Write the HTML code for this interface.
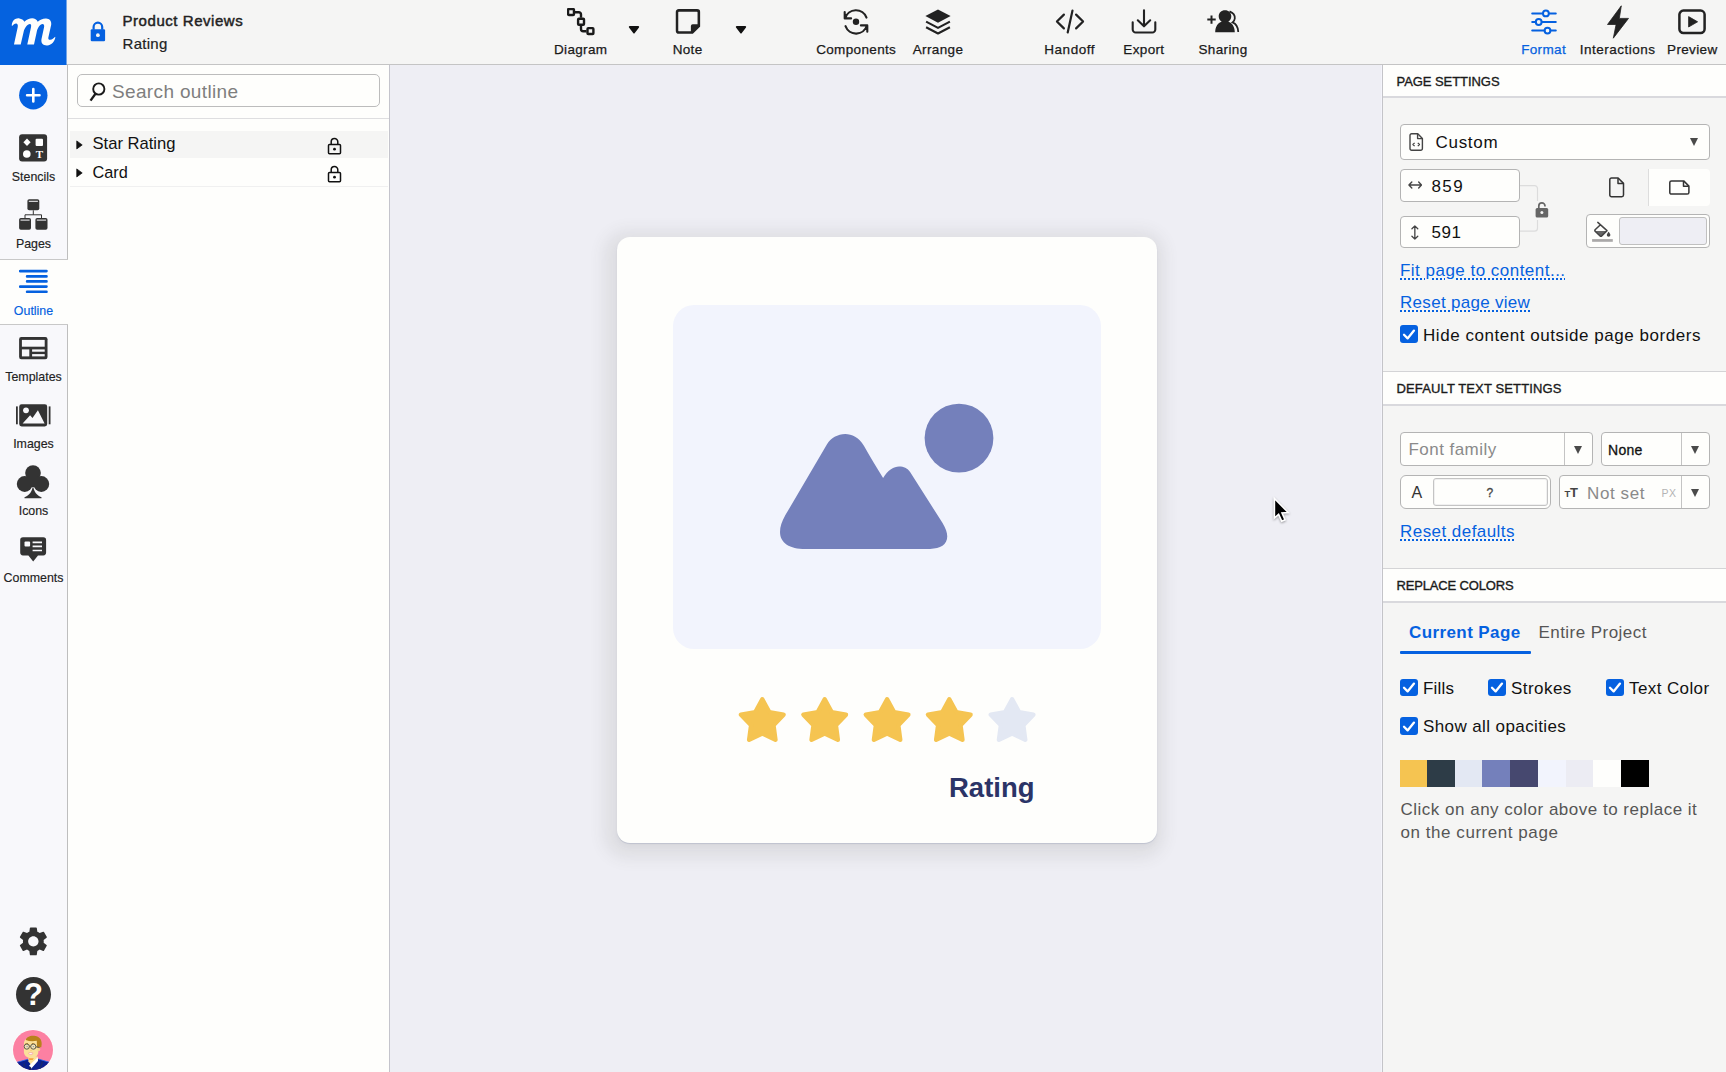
<!DOCTYPE html>
<html lang="en">
<head>
<meta charset="utf-8">
<title>Product Reviews - Rating</title>
<style>
*{box-sizing:border-box;margin:0;padding:0}
html,body{width:1726px;height:1072px;overflow:hidden;background:#eeeef4;font-family:"Liberation Sans",sans-serif;color:#111}
.abs{position:absolute}
#top{position:absolute;left:0;top:0;width:1726px;height:65px;background:#f5f5f4;border-bottom:1px solid #c4c4c4}
#logo{position:absolute;left:0;top:0;width:66px;height:65px;background:#0562df;box-shadow:1px 0 0 rgba(5,98,223,.550)}
#left{position:absolute;left:0;top:65px;width:68px;height:1007px;background:#f8f8fb;border-right:1px solid #bebebe}
#outline{position:absolute;left:68px;top:65px;width:322px;height:1007px;background:#fefefc;border-right:1px solid #c4c4cc}
#canvas{position:absolute;left:390px;top:65px;width:992px;height:1007px;background:#eeeef4;overflow:hidden}
#right{position:absolute;left:1382px;top:65px;width:344px;height:1007px;background:#f5f5f4;border-left:1px solid #c4c4c8;box-shadow:-1px 0 0 #f4f4fb;font-size:17px;letter-spacing:.500px;color:#111}
#right .hd{position:absolute;left:0;width:343px;height:35px;background:#fefefc;border-bottom:2px solid #d9d9dd;border-top:1px solid #d4d4d6;font-size:13px;letter-spacing:.100px;line-height:33px;padding-left:13.500px;color:#1a1a1a;-webkit-text-stroke:.350px #1a1a1a}
#right .box{position:absolute;border:1px solid #b4b4b4;border-radius:4px;background:#fefefc}
#right .t{position:absolute;white-space:nowrap;line-height:20px;margin-top:1px}
#right .lk{position:absolute;white-space:nowrap;line-height:20px;margin-top:.500px;color:#0561e0;text-decoration:underline dotted;text-decoration-thickness:1.500px;text-underline-offset:3px}
#right .cb{position:absolute;width:17.500px;height:17.500px;border-radius:3px;background:#0561e0}
#right .cb svg{position:absolute;left:2px;top:2.500px}
#right .dd{position:absolute;width:0;height:0;border-left:4.500px solid transparent;border-right:4.500px solid transparent;border-top:8px solid #4a4a4a}
.tb{position:absolute;top:0;height:64px;text-align:center;font-size:13.500px;letter-spacing:.350px;color:#111;white-space:nowrap}
.tb span{position:absolute;left:50%;transform:translateX(-50%);top:42.300px;line-height:16px;-webkit-text-stroke:.250px currentColor}
.tb svg{position:absolute;left:50%;transform:translateX(-50%);top:6px}
.sb{position:absolute;left:0;width:67px;text-align:center;font-size:12.400px;color:#222;line-height:14px;-webkit-text-stroke:.150px currentColor}
.sb svg{display:block;margin:0 auto}
</style>
</head>
<body>
<div id="top">
  <div id="logo"><svg class="abs" style="left:0;top:0" width="66" height="65" viewBox="0 0 66 65"><path transform="translate(6 12) scale(.035450)" d="M160 380C170 300 200 230 260 200C300 180 340 175 380 180C440 190 490 220 520 275C580 215 660 175 740 175C810 175 870 210 895 275C950 215 1040 178 1130 180C1230 182 1290 250 1275 360L1195 720C1185 770 1210 790 1250 785C1300 778 1350 740 1385 700L1392 722C1370 820 1300 940 1160 945C1040 948 985 880 1000 770L1075 420C1085 370 1065 340 1030 340C960 340 890 450 865 570L790 920L600 920L705 430C718 370 705 340 675 340C600 340 525 450 495 570L415 920L225 920L330 430C345 360 320 322 285 322C240 322 205 350 185 390Z" fill="#fefefc"/></svg></div>
  <svg class="abs" style="left:89.600px;top:21.200px" width="16" height="21" viewBox="0 0 16 21"><path d="M3.600 8.800V6a4.300 4.300 0 0 1 8.600 0v2.800" fill="none" stroke="#0561e0" stroke-width="2.200"/><rect x=".700" y="8.200" width="14.400" height="12" rx="1.200" fill="#0561e0"/><circle cx="7.900" cy="14.200" r="1.900" fill="#f5f5f4"/></svg>
  <div class="abs" style="left:122.500px;top:11.500px;font-size:15px;line-height:18px;color:#222;letter-spacing:.550px;-webkit-text-stroke:.450px #222">Product Reviews</div>
  <div class="abs" style="left:122.500px;top:34.500px;font-size:15px;line-height:18px;color:#222;letter-spacing:.3px;-webkit-text-stroke:.2px #222">Rating</div>
  <div class="tb" style="left:535.7px;width:90px;color:#1a1a1a"><svg style="top:7.900px" width="28" height="28" viewBox="0 0 28 28" fill="none" stroke="#1a1a1a" stroke-width="2.400"><rect x="1.050" y="1.050" width="5.900" height="5.900" rx=".800"/><rect x="11.100" y="10.800" width="5.900" height="5.900" rx=".800"/><rect x="20.500" y="20.100" width="5.900" height="5.900" rx=".800"/><path d="M8 4.200h3.800a2.200 2.200 0 0 1 2.200 2.200v3.400M14 17.700v3.300a2.200 2.200 0 0 0 2.200 2.200h3.300"/></svg><span>Diagram</span></div><svg class="abs" style="left:628.3px;top:24.800px" width="12" height="9" viewBox="0 0 12 9"><path d="M1.700 1h8.600a.9.9 0 0 1 .7 1.400L6.800 7.900a1 1 0 0 1-1.600 0L1 2.400A.9.900 0 0 1 1.700 1z" fill="#111"/></svg><div class="tb" style="left:642.6px;width:90px;color:#1a1a1a"><svg style="top:9px" width="25" height="25" viewBox="0 0 25 25"><path d="M3.300 1.400h18.200a1.900 1.900 0 0 1 1.900 1.900v13.600l-6.600 6.600H3.300a1.900 1.900 0 0 1-1.900-1.900V3.300a1.900 1.900 0 0 1 1.900-1.900z" fill="none" stroke="#222" stroke-width="2.700"/><path d="M23.400 15.200h-6.200a1.800 1.800 0 0 0-1.800 1.800v6.500l2.300-.6 5.100-5.100z" fill="#222"/></svg><span>Note</span></div><svg class="abs" style="left:735px;top:24.800px" width="12" height="9" viewBox="0 0 12 9"><path d="M1.700 1h8.600a.9.9 0 0 1 .7 1.400L6.800 7.900a1 1 0 0 1-1.600 0L1 2.400A.9.900 0 0 1 1.700 1z" fill="#111"/></svg><div class="tb" style="left:811.2px;width:90px;color:#1a1a1a"><svg style="top:8.500px" width="27" height="26" viewBox="0 0 27 26" fill="none" stroke="#222" stroke-width="2.100" stroke-linecap="round" stroke-linejoin="round"><circle cx="13.500" cy="12.800" r="3.200" fill="#222" stroke="none"/><path d="M2.600 9.200A11.300 11.300 0 0 1 24 8.600M2.200 3v6.400h6.400M24.400 16.600A11.300 11.300 0 0 1 3 17.200M24.800 22.800v-6.400h-6.400"/></svg><span>Components</span></div><div class="tb" style="left:893.0px;width:90px;color:#1a1a1a"><svg style="top:8.500px" width="27" height="26" viewBox="0 0 27 26"><path d="M13.500 .500l12.600 6.600-12.600 6.700L.900 7.100z" fill="#222"/><path d="M1.600 12.600l11.900 6.300 11.900-6.300M1.600 18.200l11.900 6.300 11.900-6.300" fill="none" stroke="#222" stroke-width="2.100" stroke-linejoin="round"/></svg><span>Arrange</span></div><div class="tb" style="left:1024.7px;width:90px;color:#1a1a1a"><svg style="top:9px" width="29" height="25" viewBox="0 0 29 25" fill="none" stroke="#222" stroke-width="2.200" stroke-linecap="round" stroke-linejoin="round"><path d="M8.400 5.600l-7 6.900 7 6.900M20.600 5.600l7 6.900-7 6.900M17 1.500l-4.800 22"/></svg><span style="letter-spacing:.550px">Handoff</span></div><div class="tb" style="left:1098.9px;width:90px;color:#1a1a1a"><svg style="top:9px" width="26" height="25" viewBox="0 0 26 25" fill="none" stroke="#222" stroke-width="2.100" stroke-linecap="round" stroke-linejoin="round"><path d="M13 1.300v15.800M6.800 11.300l6.200 6 6.200-6M1.700 13.200v7.300a3 3 0 0 0 3 3h16.600a3 3 0 0 0 3-3v-7.300"/></svg><span>Export</span></div><div class="tb" style="left:1178.0px;width:90px;color:#1a1a1a"><svg style="top:10px" width="33" height="23" viewBox="0 0 33 23"><path d="M5 5.400v8.400M.800 9.600h8.400" stroke="#222" stroke-width="2" fill="none"/><path d="M23 1.300c3.800 1.500 5.600 4.200 5.300 7.200-.2 1.800-1.200 3-2.200 3.900 3.300 1.300 5.400 4.300 5.700 9.600" fill="none" stroke="#222" stroke-width="1.800"/><path fill="#222" d="M18.500 .300c3.700 0 6.300 2.600 6.300 6 0 2.400-1.300 4.300-3 5.500 3.900 1.300 6.300 4.600 6.500 10.400H8.700c.2-5.800 2.600-9.100 6.500-10.400-1.700-1.200-3-3.100-3-5.500 0-3.400 2.600-6 6.300-6z"/></svg><span>Sharing</span></div><div class="tb" style="left:1498.6px;width:90px;color:#0561e0"><svg style="top:8.500px" width="26" height="26" viewBox="0 0 26 26" fill="none" stroke="#0561e0" stroke-width="2"><path d="M1.200 4.400h10.600M18 4.400h6.800M1.200 13h3.400M10.800 13h14M1.200 21.600h12.200M19.600 21.600h5.200" stroke-linecap="round"/><circle cx="14.900" cy="4.400" r="2.900"/><circle cx="7.700" cy="13" r="2.900"/><circle cx="16.500" cy="21.600" r="2.900"/></svg><span>Format</span></div><div class="tb" style="left:1572.7px;width:90px;color:#1a1a1a"><svg style="top:4.500px" width="23" height="34" viewBox="0 0 23 34"><path d="M14.800 .800L1 19.500h8.600L6.800 33.200 22 13.400h-9.200z" fill="#222" stroke="#222" stroke-width=".800" stroke-linejoin="round"/></svg><span style="letter-spacing:.500px">Interactions</span></div><div class="tb" style="left:1658.3px;width:68px;color:#1a1a1a"><svg style="top:8.500px" width="28" height="26" viewBox="0 0 28 26"><rect x="1.400" y="1.600" width="25.200" height="22.400" rx="4" fill="none" stroke="#222" stroke-width="2.500"/><path d="M10.600 7.600v10.400l9-5.200z" fill="#222" stroke="#222" stroke-width=".800" stroke-linejoin="round"/></svg><span>Preview</span></div>
</div>
<div id="left">
  <div class="abs" style="left:0;top:193.500px;width:68px;height:66.500px;background:#fefefc;border-top:1px solid #c8c8c8;border-bottom:1px solid #c8c8c8"></div>
  <svg class="abs" style="left:19px;top:16px" width="29" height="29" viewBox="0 0 29 29"><circle cx="14.3" cy="14.2" r="14.2" fill="#0561e0"/><path d="M14.3 8v12.400M8.100 14.200h12.400" stroke="#fff" stroke-width="2.6" stroke-linecap="round"/></svg>
  <!-- stencils -->
  <svg class="abs" style="left:19px;top:69px" width="29" height="28" viewBox="0 0 29 28"><rect x="0.1" y="0.2" width="28" height="27.4" rx="3" fill="#333"/><path d="M8 4.6l3.6 3.7L8 12 4.4 8.3z" fill="#fff"/><rect x="16.6" y="4.8" width="7.4" height="7.2" rx="1" fill="#fff"/><circle cx="7.8" cy="20" r="3.8" fill="#fff"/><text x="20.500" y="23.700" font-family="Liberation Serif,serif" font-weight="bold" font-size="11" fill="#fff" text-anchor="middle">T</text></svg>
  <div class="sb" style="top:104.8px">Stencils</div>
  <!-- pages -->
  <svg class="abs" style="left:19px;top:134.3px" width="29" height="32" viewBox="0 0 29 32"><g fill="#333"><rect x="8.400" y="0.200" width="11.900" height="11.100" rx="1.800"/><rect x="0.100" y="19" width="11.900" height="11.800" rx="1.800"/><rect x="16.400" y="19" width="12.100" height="11.800" rx="1.800"/></g><path d="M9.8 2.300h9.100M1.500 21.100h9.100M17.800 21.100h9.300" stroke="#f8f8fb" stroke-width="1"/><path d="M14.300 11.300v4.500M6 19v-3.200h16.500V19" stroke="#333" stroke-width="1" fill="none"/></svg>
  <div class="sb" style="top:171.8px">Pages</div>
  <!-- outline -->
  <svg class="abs" style="left:19px;top:204.400px" width="29" height="24" viewBox="0 0 29 24"><path d="M1.100 2.100h26.400M8.100 7.400h19.400M8.100 12.400h19.400M1.100 17.600h26.400M8.100 22.800h19.400" stroke="#0561e0" stroke-width="2.600" stroke-linecap="round"/></svg>
  <div class="sb" style="top:238.8px;color:#0561e0">Outline</div>
  <!-- templates -->
  <svg class="abs" style="left:19px;top:272px" width="29" height="23" viewBox="0 0 29 23"><rect x="0.100" y="0.100" width="28.400" height="22.100" rx="2.200" fill="#333"/><rect x="2.900" y="2.900" width="22.800" height="6.800" fill="#f8f8fb"/><rect x="2.900" y="12.400" width="7.400" height="7" fill="#f8f8fb"/><rect x="13.100" y="12.400" width="12.600" height="2.300" fill="#f8f8fb"/><rect x="13.100" y="17.100" width="12.600" height="2.300" fill="#f8f8fb"/></svg>
  <div class="sb" style="top:304.8px">Templates</div>
  <!-- images -->
  <svg class="abs" style="left:16px;top:339px" width="35" height="23" viewBox="0 0 35 23"><rect x="3.200" y="0.300" width="28" height="22.100" rx="2.400" fill="#333"/><rect x="0" y="2.400" width="1.800" height="17.900" fill="#333"/><rect x="32.700" y="2.400" width="1.800" height="17.900" fill="#333"/><circle cx="10" cy="6.300" r="2.900" fill="#f8f8fb"/><path d="M6.600 19.600l7.500-8.400 2.400 2.700 5.400-7.700 6.700 13.400z" fill="#f8f8fb"/></svg>
  <div class="sb" style="top:371.8px">Images</div>
  <!-- icons (club) -->
  <svg class="abs" style="left:16px;top:400px" width="35" height="34" viewBox="0 0 35 34"><g fill="#333"><circle cx="17" cy="8" r="7.800"/><circle cx="8.700" cy="19" r="7.900"/><circle cx="25.300" cy="19" r="7.900"/><rect x="11" y="12" width="12" height="10"/><path d="M17 20c-.6 6.500-3.800 10.500-8.500 12.300v.9h17v-.9c-4.700-1.800-7.900-5.800-8.500-12.300z"/></g></svg>
  <div class="sb" style="top:438.8px">Icons</div>
  <!-- comments -->
  <svg class="abs" style="left:20px;top:472px" width="27" height="26" viewBox="0 0 27 26"><path d="M3 .300h20.300a2.800 2.800 0 0 1 2.800 2.800v12.500a2.800 2.800 0 0 1-2.800 2.800h-5.300l-4.800 6-4.800-6H3A2.800 2.800 0 0 1 .200 15.600V3.100A2.800 2.800 0 0 1 3 .300z" fill="#333"/><rect x="4.500" y="4.400" width="5.600" height="5.200" rx="1" fill="#f8f8fb"/><path d="M12.600 5.300h9.400M12.600 9.400h9.400M12.600 13.500h9.400" stroke="#f8f8fb" stroke-width="1.700"/></svg>
  <div class="sb" style="top:505.8px">Comments</div>
  <!-- settings / help / avatar placeholders -->
  <svg class="abs" style="left:16.050px;top:858.750px" width="34.700" height="34.700" viewBox="0 0 24 24"><path fill="#333" d="M19.140 12.940c.040-.300.060-.610.060-.940 0-.320-.020-.640-.070-.940l2.030-1.580a.490.490 0 0 0 .120-.610l-1.920-3.320a.488.488 0 0 0-.590-.220l-2.390.960c-.500-.380-1.030-.700-1.620-.940l-.360-2.540a.484.484 0 0 0-.480-.410h-3.840c-.240 0-.430.170-.470.410l-.360 2.540c-.590.240-1.130.570-1.620.940l-2.390-.960c-.220-.080-.470 0-.590.220L2.740 8.870c-.120.210-.080.470.120.610l2.030 1.580c-.050.300-.090.630-.090.940s.020.640.070.940l-2.030 1.580a.490.490 0 0 0-.120.610l1.920 3.320c.120.220.370.290.590.220l2.390-.960c.500.380 1.030.700 1.620.940l.360 2.540c.050.240.240.410.480.410h3.840c.240 0 .440-.170.470-.410l.360-2.540c.590-.240 1.130-.560 1.620-.940l2.390.960c.220.080.470 0 .590-.220l1.920-3.320c.120-.220.070-.470-.120-.610l-2.010-1.580zM12 15.600c-1.980 0-3.600-1.620-3.600-3.600s1.620-3.600 3.600-3.600 3.600 1.620 3.600 3.600-1.620 3.600-3.600 3.600z"/></svg>
  <div class="abs" style="left:16px;top:912px;width:35px;height:35px;border-radius:50%;background:#333;color:#fefefc;font-weight:bold;font-size:31px;line-height:36px;text-align:center">?</div>
  <svg class="abs" style="left:12.100px;top:964px" width="42" height="42" viewBox="-.500 -.500 42 42"><defs><clipPath id="avc"><circle cx="20.500" cy="20.500" r="20"/></clipPath></defs><circle cx="20.500" cy="20.500" r="20.600" fill="#fefefc"/><circle cx="20.500" cy="20.500" r="20" fill="#fc80a2"/><g clip-path="url(#avc)"><path d="M4.500 32.800L15.600 29.700l5 4.500 5.200-4.700L37 32.800V42H4.500z" fill="#0a1f8f"/><path d="M4.500 32.800L15.600 29.700M25.800 29.500L37 32.800" stroke="#2a6cf0" stroke-width=".800" fill="none"/><path d="M12 34l-1 7M30 32l-3 9" stroke="#1c2a6a" stroke-width="1.300" fill="none"/><path d="M15.900 27h9.500v4l-5.500 6-4-5z" fill="#fbe09a"/><path d="M16.300 28.800h5l-1.200 1.600h-3.200z" fill="#f6a23a"/><path d="M25.400 27.800v3.600L18.600 39.300l-2-3.200z" fill="#fff"/><path d="M17.300 36.800l1.600 1.800-1 3h-1.800z" fill="#14205a"/><rect x="11.400" y="8.500" width="14.400" height="19.600" rx="5.500" fill="#fbe09a"/><circle cx="26.200" cy="20" r="1.500" fill="#f5d48a"/><path d="M13.300 10.500c.5-3 4-4.600 8.200-4.300 4.800.3 7.900 3.400 7.700 8.300l-.4 3.200-4.300.3-.2-6.800c-3.800.8-7.600.6-11-.7z" fill="#b8821c"/><path d="M12.600 14.800l2.800-.9M19.400 13.900l2.800.9" stroke="#b8821c" stroke-width="1.100"/><g fill="none" stroke="#5c5a4c" stroke-width="1"><circle cx="14.300" cy="17.100" r="2.600" fill="#f3e3b3"/><circle cx="20.800" cy="17.100" r="2.600" fill="#f3e3b3"/><path d="M16.900 16.700h1.300M23.400 17.300l3.600.7"/></g><circle cx="14.600" cy="17.100" r=".600" fill="#6a86b8"/><circle cx="20.800" cy="17.100" r=".600" fill="#6a86b8"/><path d="M15.900 23.800c1.200-.9 3.500-.9 4.700 0-1.200 1.700-3.500 1.700-4.700 0z" fill="#fff" stroke="#f79aa8" stroke-width=".700"/><path d="M17.700 21.600l.8-.8.800.8" fill="#f6b04a"/></g></svg>
</div>
<div id="outline">
  <div class="abs" style="left:9px;top:9px;width:302.500px;height:33px;border:1px solid #bcbcbc;border-radius:5px;background:#fefefc"></div>
  <svg class="abs" style="left:20px;top:17px" width="18" height="20" viewBox="0 0 18 20" fill="none" stroke="#1a1a1a" stroke-width="1.900"><circle cx="10.800" cy="7" r="5.600"/><path d="M7.500 11.800L2.500 18.600" stroke-width="2.300"/></svg>
  <div class="abs" style="left:44px;top:15.800px;font-size:19px;line-height:22px;color:#7e7e7e;letter-spacing:.350px;white-space:nowrap">Search outline</div>
  <div class="abs" style="left:0;top:52.500px;width:321px;height:1px;background:#dedee0"></div>
  <div class="abs" style="left:2px;top:65.500px;width:318px;height:27.500px;background:#f5f5f4"></div>
  <svg class="abs" style="left:8px;top:74.500px" width="7.300" height="10" viewBox="0 0 8 11"><path d="M.800 1l6 4.400-6 4.400z" fill="#111" stroke="#111" stroke-width=".800" stroke-linejoin="round"/></svg>
  <svg class="abs" style="left:8px;top:102.500px" width="7.300" height="10" viewBox="0 0 8 11"><path d="M.800 1l6 4.400-6 4.400z" fill="#111" stroke="#111" stroke-width=".800" stroke-linejoin="round"/></svg>
  <div class="abs" style="left:24.500px;top:69px;font-size:16.600px;line-height:20px;color:#111;white-space:nowrap">Star Rating</div>
  <div class="abs" style="left:24.500px;top:97px;font-size:16.300px;line-height:20px;color:#111;white-space:nowrap">Card</div>
  <svg class="abs" style="left:259px;top:71.800px" width="15" height="18" viewBox="0 0 15 18" fill="none" stroke="#111" stroke-width="1.500"><path d="M4.200 7.500V4.800a3.300 3.300 0 0 1 6.600 0v2.700"/><rect x="1.500" y="7.500" width="12" height="9.300" rx="1"/><circle cx="7.500" cy="12.200" r="1.400" fill="#111" stroke="none"/></svg>
  <svg class="abs" style="left:259px;top:99.800px" width="15" height="18" viewBox="0 0 15 18" fill="none" stroke="#111" stroke-width="1.500"><path d="M4.200 7.500V4.800a3.300 3.300 0 0 1 6.600 0v2.700"/><rect x="1.500" y="7.500" width="12" height="9.300" rx="1"/><circle cx="7.500" cy="12.200" r="1.400" fill="#111" stroke="none"/></svg>
  <div class="abs" style="left:2px;top:121px;width:318px;height:1px;background:#f0f0f0"></div>
</div>
<div id="canvas">
  <div class="abs" style="left:227px;top:171.800px;width:540.100px;height:606.400px;border-radius:13px;background:#fefefc;box-shadow:-3px 4.500px 16px 10px rgba(70,70,62,.095),0 4px 6px rgba(70,70,62,.030),0 1px 1px rgba(100,120,170,.220)"></div>
  <div class="abs" style="left:283.400px;top:239.900px;width:427.400px;height:343.700px;border-radius:21px;background:#f2f4fd"></div>
  <svg class="abs" style="left:0;top:0" width="992" height="1007" viewBox="0 0 992 1007">
    <path d="M395.4 450.1L437.0 379.3C444.0 368.0,463.0 363.0,473.9 380.8C480.0 392.0,487.0 403.0,493.1 413.1C498.0 405.0,504.0 401.6,509.0 401.6C514.0 401.6,517.0 403.0,520.1 407.0L552.4 457.8C563.0 475.0,555.0 483.9,540.1 483.9L415.4 483.9C393.0 483.9,383.0 472.0,395.4 450.1Z" fill="#7480bb"/>
    <circle cx="569" cy="373.1" r="34.400" fill="#7480bb"/>
    <polygon points="372.30,634.20 379.24,647.05 393.60,649.68 383.52,660.25 385.47,674.72 372.30,668.40 359.13,674.72 361.08,660.25 351.00,649.68 365.36,647.05" fill="#f5c451" stroke="#f5c451" stroke-width="4.400" stroke-linejoin="round"/><polygon points="434.70,634.20 441.64,647.05 456.00,649.68 445.92,660.25 447.87,674.72 434.70,668.40 421.53,674.72 423.48,660.25 413.40,649.68 427.76,647.05" fill="#f5c451" stroke="#f5c451" stroke-width="4.400" stroke-linejoin="round"/><polygon points="497.10,634.20 504.04,647.05 518.40,649.68 508.32,660.25 510.27,674.72 497.10,668.40 483.93,674.72 485.88,660.25 475.80,649.68 490.16,647.05" fill="#f5c451" stroke="#f5c451" stroke-width="4.400" stroke-linejoin="round"/><polygon points="559.30,634.20 566.24,647.05 580.60,649.68 570.52,660.25 572.47,674.72 559.30,668.40 546.13,674.72 548.08,660.25 538.00,649.68 552.36,647.05" fill="#f5c451" stroke="#f5c451" stroke-width="4.400" stroke-linejoin="round"/><polygon points="622.10,634.20 629.04,647.05 643.40,649.68 633.32,660.25 635.27,674.72 622.10,668.40 608.93,674.72 610.88,660.25 600.80,649.68 615.16,647.05" fill="#e3e8f3" stroke="#e3e8f3" stroke-width="4.400" stroke-linejoin="round"/>
    <polygon points="884.4,433.5 884.4,453.1 888.6,449.4 891.7,456.2 895.1,454.8 892.0,448.0 898.2,447.5" fill="#000" stroke="#fff" stroke-width="1.600" stroke-linejoin="miter" style="filter:drop-shadow(0 1px 1.200px rgba(0,0,0,.350))"/>
  </svg>
  <div class="abs" style="left:559.0px;top:706px;font-size:27.500px;font-weight:bold;line-height:32px;margin-top:1.300px;color:#2b3467;white-space:nowrap">Rating</div>
</div>
<div id="right">
  <div class="hd" style="top:0;border-top:0;height:33px;letter-spacing:-.060px">PAGE SETTINGS</div>
  <div class="box" style="left:17px;top:59px;width:310px;height:35.500px"></div>
  <svg class="abs" style="left:25.5px;top:68px" width="15" height="18" viewBox="0 0 15 18" fill="none" stroke="#444" stroke-width="1.400" stroke-linejoin="round"><path d="M2.600 .800h6.200l4.600 4.600v10.200a1.600 1.600 0 0 1-1.600 1.600H2.600A1.600 1.600 0 0 1 1 15.600V2.400A1.600 1.600 0 0 1 2.600 .800z"/><path d="M8.600 1v4.600h4.600"/><path d="M5.600 9.800l-1.700 1.700 1.700 1.700M8.800 9.800l1.700 1.700-1.700 1.700" stroke-width="1.200"/></svg>
  <div class="t" style="left:52.5px;top:67px;letter-spacing:.700px">Custom</div>
  <div class="dd" style="left:307.200px;top:73px"></div>
  <div class="box" style="left:17px;top:104px;width:120px;height:33px"></div>
  <div class="box" style="left:17px;top:150.500px;width:120px;height:32.500px"></div>
  <svg class="abs" style="left:24.500px;top:115.300px" width="14.500" height="10" viewBox="0 0 16 11" fill="none" stroke="#444" stroke-width="1.500" stroke-linecap="round" stroke-linejoin="round"><path d="M1 5.500h14M4.200 2.200L1 5.500l3.200 3.300M11.800 2.200L15 5.500l-3.200 3.300"/></svg>
  <svg class="abs" style="left:27px;top:160px" width="9.700" height="15" viewBox="0 0 11 17" fill="none" stroke="#444" stroke-width="1.500" stroke-linecap="round" stroke-linejoin="round"><path d="M5.500 1v15M2.200 4.200L5.500 1l3.300 3.200M2.200 12.800L5.500 16l3.300-3.200"/></svg>
  <div class="t" style="left:48.500px;top:110.500px;letter-spacing:1.400px">859</div>
  <div class="t" style="left:48.500px;top:157px;letter-spacing:.500px">591</div>
  <svg class="abs" style="left:137px;top:119px" width="20" height="50" viewBox="0 0 20 50" fill="none" stroke="#dcdcdc" stroke-width="1.200"><path d="M0 1.600h14.500a3 3 0 0 1 3 3V17M0 47.200h14.500a3 3 0 0 0 3-3V36"/></svg>
  <svg class="abs" style="left:151.500px;top:136px" width="14" height="17" viewBox="0 0 14 17"><path d="M3.800 7.600V5a3.100 3.100 0 0 1 6.200 0v.6" fill="none" stroke="#666" stroke-width="1.700"/><rect x=".600" y="7" width="12.600" height="9.400" rx="1.500" fill="#666"/><circle cx="6.900" cy="11.600" r="1.500" fill="#f5f5f4"/></svg>
  <svg class="abs" style="left:225.5px;top:111.5px" width="16" height="21" viewBox="0 0 16 21" fill="none" stroke="#333" stroke-width="1.500" stroke-linejoin="round"><path d="M2.500 1h6.600l5.400 5.400V18a1.700 1.700 0 0 1-1.700 1.700H2.500A1.700 1.700 0 0 1 .800 18V2.700A1.700 1.700 0 0 1 2.500 1z"/><path d="M9 1.200v5.400h5.400"/></svg>
  <div class="abs" style="left:264.5px;top:104px;width:62.500px;height:36.500px;background:#fefefc;border-left:1px solid #ddd;border-radius:0 4px 4px 0"></div>
  <svg class="abs" style="left:286px;top:114.5px" width="21" height="15" viewBox="0 0 21 15" fill="none" stroke="#333" stroke-width="1.500" stroke-linejoin="round"><path d="M2.500 .900h12.200l5.200 5.200v6.300a1.700 1.700 0 0 1-1.700 1.700H2.500a1.700 1.700 0 0 1-1.700-1.700V2.600A1.700 1.700 0 0 1 2.500 .900z"/><path d="M14.500 1.100v5.200h5.200"/></svg>
  <div class="box" style="left:203px;top:149px;width:124px;height:34px"></div>
  <svg class="abs" style="left:209px;top:156px" width="22" height="22" viewBox="0 0 22 22"><path d="M3.600 10h10.800L9 15.200z" fill="#666"/><path d="M5.800 1.400L15 9.600 9.700 14.900a1.100 1.100 0 0 1-1.600 0L3.100 10.100a.9.900 0 0 1 0-1.300L7.900 4.300" fill="none" stroke="#444" stroke-width="1.500" stroke-linecap="round" stroke-linejoin="round"/><path d="M16.600 10.700c1.200 1.600 1.800 2.500 1.800 3.300a1.800 1.800 0 0 1-3.600 0c0-.8.600-1.700 1.800-3.300z" fill="#444"/><rect x=".100" y="18.100" width="20.700" height="2.700" fill="#aaa8a8"/></svg>
  <div class="abs" style="left:235.5px;top:152px;width:88.500px;height:28px;background:#eeeef4;border:1px solid #c0c0c0;border-radius:3px"></div>
  <div class="lk" style="left:17px;top:195px;letter-spacing:.480px">Fit page to content...</div>
  <div class="lk" style="left:17px;top:227.3px;letter-spacing:.300px">Reset page view</div>
  <div class="cb" style="left:17.2px;top:260.3px"><svg width="14" height="13" viewBox="0 0 14 13"><path d="M2 6.800l3.600 3.600L12 2.600" fill="none" stroke="#fff" stroke-width="2.300" stroke-linecap="round" stroke-linejoin="round"/></svg></div>
  <div class="t" style="left:40px;top:259.5px;letter-spacing:.550px">Hide content outside page borders</div>

  <div class="hd" style="top:306px;letter-spacing:.130px">DEFAULT TEXT SETTINGS</div>
  <div class="box" style="left:17px;top:367px;width:193px;height:33.500px"></div>
  <div class="abs" style="left:180.500px;top:368px;width:1px;height:31.500px;background:#c4c4c4"></div>
  <div class="t" style="left:25.5px;top:374px;color:#8a8a8a;letter-spacing:.450px">Font family</div>
  <div class="dd" style="left:191.400px;top:381px"></div>
  <div class="box" style="left:218px;top:367px;width:109px;height:33.500px"></div>
  <div class="abs" style="left:298px;top:368px;width:1px;height:31.500px;background:#c4c4c4"></div>
  <div class="t" style="left:225px;top:373.500px;font-size:14px;letter-spacing:.300px;-webkit-text-stroke:.300px #111">None</div>
  <div class="dd" style="left:307.800px;top:381px"></div>
  <div class="box" style="left:17px;top:410px;width:151px;height:34px;border-radius:6px"></div>
  <div class="t" style="left:28.5px;top:417px;font-size:16px;color:#333;letter-spacing:0">A</div>
  <div class="abs" style="left:50px;top:413px;width:114.500px;height:28px;border:1px solid #c4c4c4;border-radius:3px;background:#fefefc;box-shadow:inset 0 0 0 1px #f0f0f0"></div>
  <div class="t" style="left:103.500px;top:417px;font-size:12px;color:#444;-webkit-text-stroke:.300px #444;letter-spacing:0">?</div>
  <div class="box" style="left:176px;top:410px;width:151px;height:34px"></div>
  <div class="abs" style="left:298px;top:411px;width:1px;height:32px;background:#c4c4c4"></div>
  <div class="t" style="left:181.500px;top:418px;font-size:9.500px;color:#444;font-weight:bold;letter-spacing:0">T</div>
  <div class="t" style="left:187px;top:417px;font-size:13px;color:#444;font-weight:bold;letter-spacing:0">T</div>
  <div class="t" style="left:204px;top:418px;color:#8a8a8a;letter-spacing:.600px">Not set</div>
  <div class="t" style="left:278.500px;top:417px;font-size:10.500px;color:#b4b4b4;letter-spacing:.600px">PX</div>
  <div class="dd" style="left:307.800px;top:424px"></div>
  <div class="lk" style="left:17px;top:456px;letter-spacing:.450px">Reset defaults</div>

  <div class="hd" style="top:503px;letter-spacing:-.160px">REPLACE COLORS</div>
  <div class="t" style="left:26px;top:557px;font-weight:bold;color:#0561e0;letter-spacing:.400px">Current Page</div>
  <div class="abs" style="left:17px;top:586px;width:130.500px;height:2.800px;background:#0561e0;border-radius:1px"></div>
  <div class="t" style="left:155.5px;top:557px;color:#555;letter-spacing:.450px">Entire Project</div>
  <div class="cb" style="left:17.2px;top:613.8px"><svg width="14" height="13" viewBox="0 0 14 13"><path d="M2 6.800l3.600 3.600L12 2.600" fill="none" stroke="#fff" stroke-width="2.300" stroke-linecap="round" stroke-linejoin="round"/></svg></div>
  <div class="t" style="left:40px;top:613px;letter-spacing:.200px">Fills</div>
  <div class="cb" style="left:105.4px;top:613.8px"><svg width="14" height="13" viewBox="0 0 14 13"><path d="M2 6.800l3.600 3.600L12 2.600" fill="none" stroke="#fff" stroke-width="2.300" stroke-linecap="round" stroke-linejoin="round"/></svg></div>
  <div class="t" style="left:128px;top:613px;letter-spacing:.450px">Strokes</div>
  <div class="cb" style="left:223px;top:613.8px"><svg width="14" height="13" viewBox="0 0 14 13"><path d="M2 6.800l3.600 3.600L12 2.600" fill="none" stroke="#fff" stroke-width="2.300" stroke-linecap="round" stroke-linejoin="round"/></svg></div>
  <div class="t" style="left:246px;top:613px;letter-spacing:.400px">Text Color</div>
  <div class="cb" style="left:17.2px;top:652px"><svg width="14" height="13" viewBox="0 0 14 13"><path d="M2 6.800l3.600 3.600L12 2.600" fill="none" stroke="#fff" stroke-width="2.300" stroke-linecap="round" stroke-linejoin="round"/></svg></div>
  <div class="t" style="left:40px;top:651px;letter-spacing:.400px">Show all opacities</div>
  <div class="abs" style="left:17px;top:695px;height:27px;width:248.500px;background:linear-gradient(90deg,#f5c451 0 27.300px,#2d3c47 27.300px 55.200px,#e3e8f3 55.200px 82.300px,#7480bb 82.300px 110.200px,#46486f 110.200px 138.100px,#f2f4fd 138.100px 165.500px,#ececf3 165.500px 192.900px,#fefefc 192.900px 220.800px,#000 220.800px)"></div>
  <div class="t" style="left:17.5px;top:733.5px;color:#555;letter-spacing:.500px">Click on any color above to replace it</div>
  <div class="t" style="left:17.5px;top:757.3px;color:#555;letter-spacing:.550px">on the current page</div>
</div>
</body>
</html>
